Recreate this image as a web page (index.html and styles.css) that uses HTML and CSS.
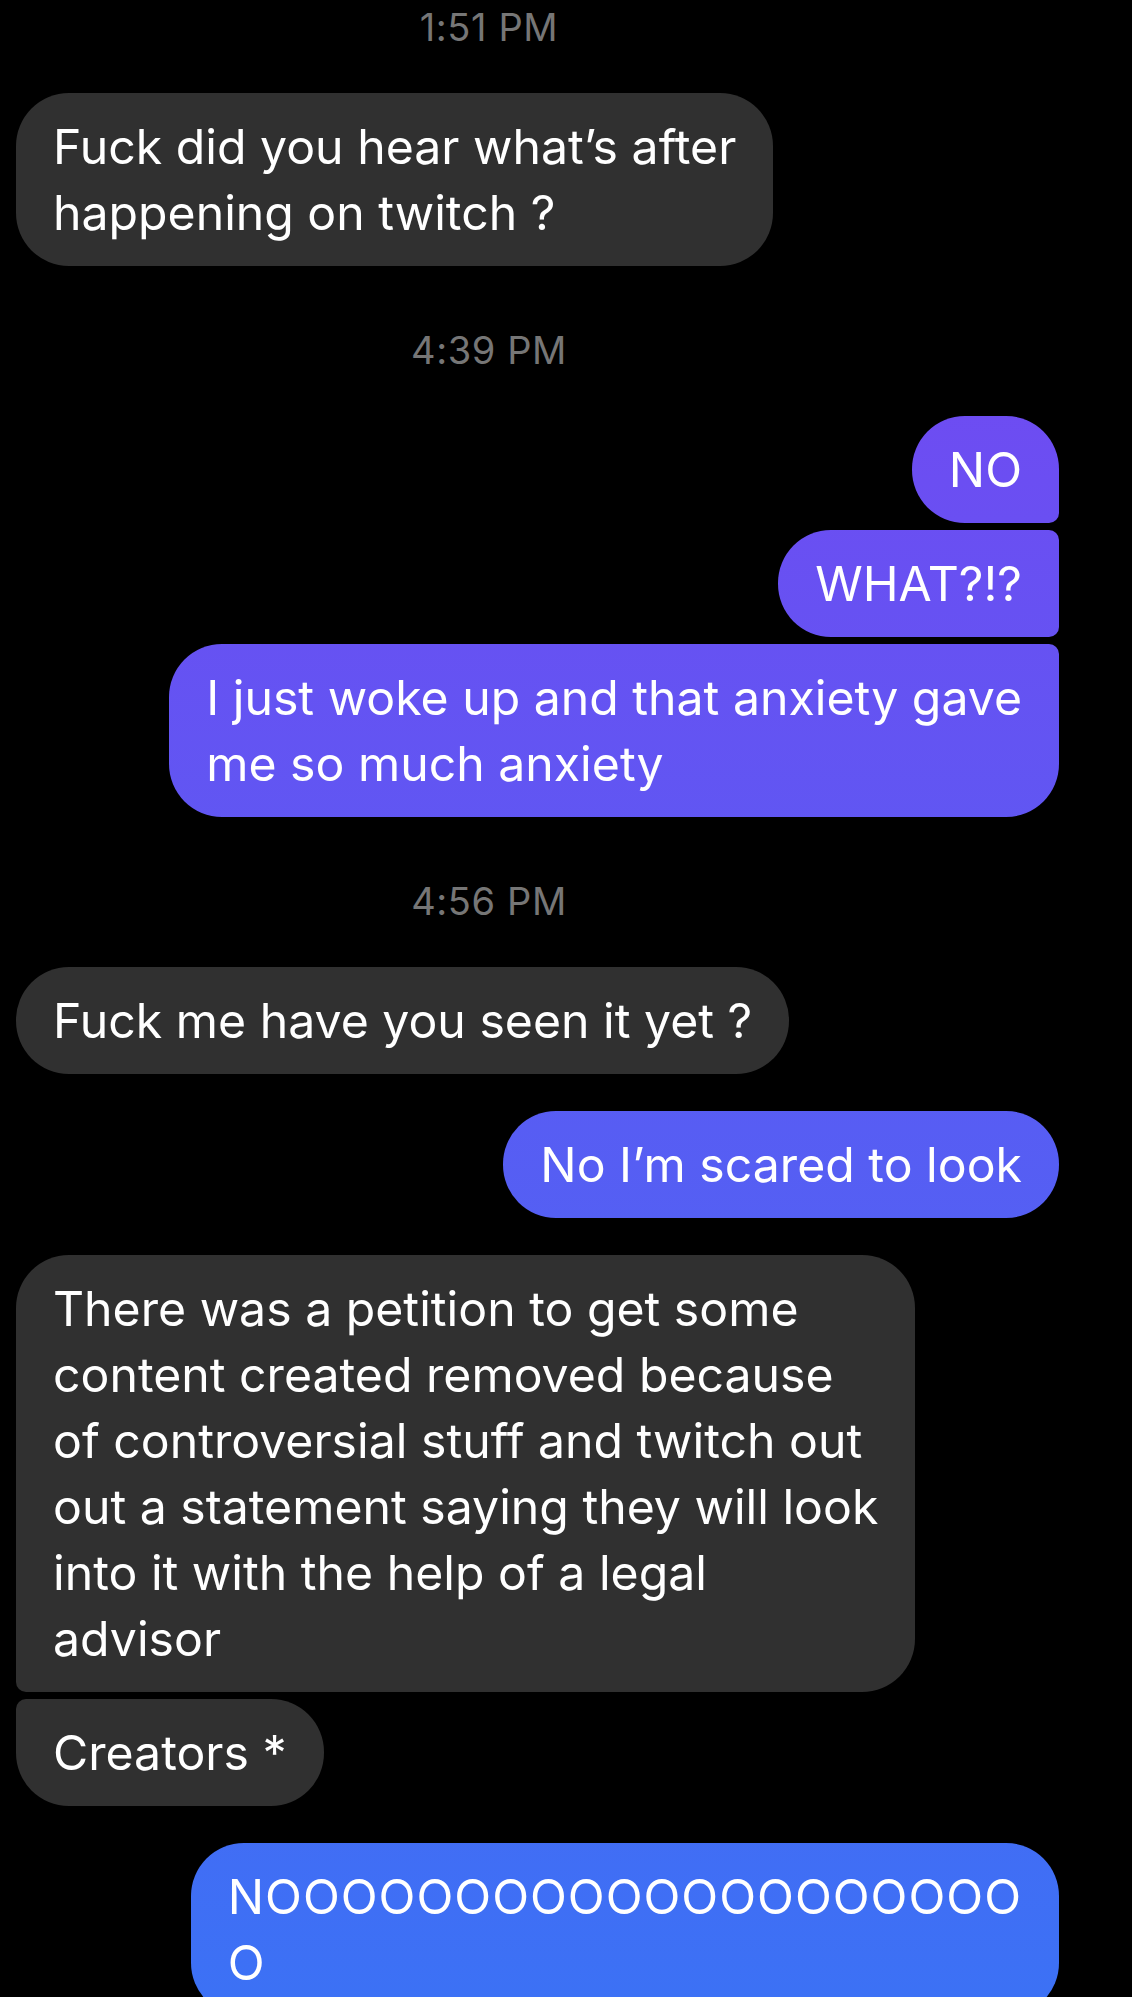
FILE: index.html
```html
<!DOCTYPE html>
<html lang="en">
<head>
  <meta charset="UTF-8">
  <meta name="viewport" content="width=device-width, initial-scale=1.0">
  <title>Chat</title>
  <link rel="stylesheet" href="styles.css">
</head>
<body>

  <div class="chat">

    <div class="time">1:51 PM</div>

    <div class="group in">
      <div class="bubble">Fuck did you hear what’s after<br>happening on twitch ?</div>
    </div>

    <div class="time">4:39 PM</div>

    <div class="group out">
      <div class="bubble">NO</div>
      <div class="bubble">WHAT?!?</div>
      <div class="bubble">I just woke up and that anxiety gave<br>me so much anxiety</div>
    </div>

    <div class="time">4:56 PM</div>

    <div class="group in">
      <div class="bubble">Fuck me have you seen it yet ?</div>
    </div>

    <div class="group out">
      <div class="bubble">No I’m scared to look</div>
    </div>

    <div class="group in">
      <div class="bubble">There was a petition to get some<br>content created removed because<br>of controversial stuff and twitch out<br>out a statement saying they will look<br>into it with the help of a legal<br>advisor</div>
      <div class="bubble">Creators *</div>
    </div>

    <div class="group out">
      <div class="bubble shout">NOOOOOOOOOOOOOOOOOOOO<br>O</div>
    </div>

  </div>

</body>
</html>
```

FILE: styles.css
```css
/* Reset */
* {
  margin: 0;
  padding: 0;
  box-sizing: border-box;
}

body {
  font-family: 'Inter', 'Liberation Sans', sans-serif;
  background-color: #000;
  color: #fff;
}

/* Conversation column */
.chat {
  display: flex;
  flex-direction: column;
  height: 100vh;
  overflow: hidden;
  padding: 5px 73px 0 16px;
}

.time {
  font-size: 38px;
  letter-spacing: 0.6px;
  line-height: 44px;
  color: #767676;
  text-align: center;
  padding-right: 97px;
  margin: 62px 0 44px;
}

.time:first-child {
  margin-top: 0;
}

.group {
  display: flex;
  flex-direction: column;
  gap: 7px;
}

.group + .group {
  margin-top: 37px;
}

.group.in {
  align-items: flex-start;
}

.group.out {
  align-items: flex-end;
}

/* Bubbles */
.bubble {
  font-size: 48.2px;
  line-height: 66px;
  padding: 20.5px 37px;
  border-radius: 53px;
  white-space: nowrap;
}

.bubble.shout {
  letter-spacing: 1px;
}

.in .bubble {
  background-color: #303030;
}

/* sent bubbles share one gradient over the whole screen */
.out .bubble {
  background: linear-gradient(to bottom, #7a43f1, #3c71f5) fixed;
}

/* grouped corners */
.in .bubble:not(:last-child) {
  border-bottom-left-radius: 10px;
}

.in .bubble:not(:first-child) {
  border-top-left-radius: 10px;
}

.out .bubble:not(:last-child) {
  border-bottom-right-radius: 10px;
}

.out .bubble:not(:first-child) {
  border-top-right-radius: 10px;
}
```
